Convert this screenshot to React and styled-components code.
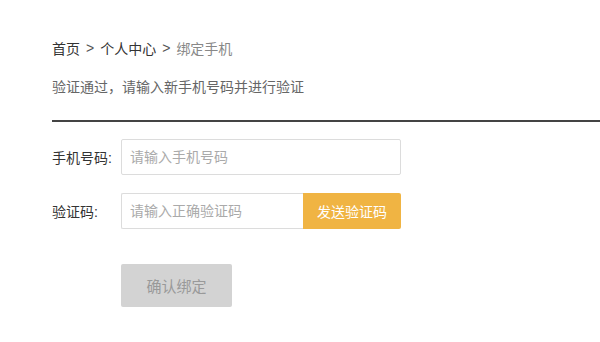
import React from "react";
import styled, { createGlobalStyle } from "styled-components";

const GlobalStyle = createGlobalStyle`
  body {
    margin: 0;
    background: #fff;
    font-family: "Liberation Sans", "Noto Sans CJK SC", sans-serif;
  }
`;

const App = () => {
  return (
    <Page>
      <GlobalStyle />
      <Breadcrumb>
        <Crumb>首页</Crumb>
        <Sep>&gt;</Sep>
        <Crumb>个人中心</Crumb>
        <Sep>&gt;</Sep>
        <Crumb current>绑定手机</Crumb>
      </Breadcrumb>
      <Tip>验证通过，请输入新手机号码并进行验证</Tip>
      <Divider />
      <Form>
        <Row>
          <Label>手机号码:</Label>
          <Input width={280} placeholder="请输入手机号码" />
        </Row>
        <Row>
          <Label>验证码:</Label>
          <Group>
            <Input width={182} joined placeholder="请输入正确验证码" />
            <SendButton>发送验证码</SendButton>
          </Group>
        </Row>
        <Actions>
          <ConfirmButton disabled>确认绑定</ConfirmButton>
        </Actions>
      </Form>
    </Page>
  );
};

export default App;

const Page = styled.div`
  padding: 38px 0 0 52px;
`;

const Breadcrumb = styled.div`
  display: flex;
  align-items: center;
  height: 20px;
  font-size: 14px;
  color: #333;
`;

const Crumb = styled.span`
  color: ${(p) => (p.current ? "#888" : "#333")};
`;

const Sep = styled.span`
  margin: 0 6px;
  color: #555;
`;

const Tip = styled.div`
  margin-top: 19px;
  height: 20px;
  line-height: 20px;
  font-size: 14px;
  color: #666;
`;

const Divider = styled.div`
  margin-top: 23px;
  height: 2px;
  background: #444;
`;

const Form = styled.div`
  margin-top: 17px;
  display: flex;
  flex-direction: column;
  gap: 18px;
`;

const Row = styled.div`
  display: flex;
  align-items: center;
`;

const Label = styled.div`
  width: 69px;
  font-size: 14px;
  color: #333;
`;

const Group = styled.div`
  display: flex;
`;

const Input = styled.input`
  box-sizing: border-box;
  width: ${(p) => p.width}px;
  height: 36px;
  padding: 0 8px;
  border: 1px solid #dcdcdc;
  border-radius: ${(p) => (p.joined ? "2px 0 0 2px" : "2px")};
  border-right: ${(p) => (p.joined ? "none" : "1px solid #dcdcdc")};
  font-family: inherit;
  font-size: 14px;
  color: #333;
  outline: none;
  &::placeholder {
    color: #aaa;
  }
`;

const SendButton = styled.button`
  box-sizing: border-box;
  width: 98px;
  height: 36px;
  border: none;
  border-radius: 0 2px 2px 0;
  background: #f0b443;
  color: #fff;
  font-family: inherit;
  font-size: 14px;
  cursor: pointer;
`;

const Actions = styled.div`
  margin-top: 17px;
  padding-left: 69px;
`;

const ConfirmButton = styled.button`
  width: 111px;
  height: 43px;
  border: none;
  border-radius: 2px;
  background: #d3d3d3;
  color: #999;
  font-family: inherit;
  font-size: 15px;
`;
